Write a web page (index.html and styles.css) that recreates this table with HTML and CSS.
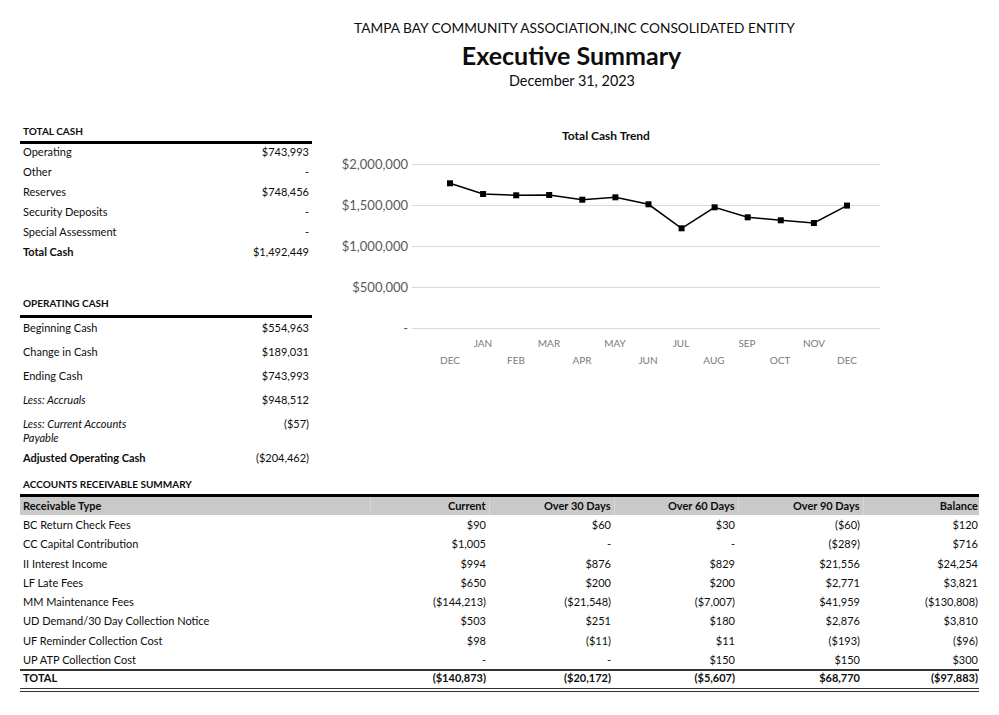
FILE: index.html
```html
<!DOCTYPE html>
<html>
<head>
<meta charset="utf-8">
<title>Executive Summary</title>
<link rel="stylesheet" href="styles.css">
</head>
<body>
<div class="page">
  <header class="header">
    <div class="org">TAMPA BAY COMMUNITY ASSOCIATION,INC CONSOLIDATED ENTITY</div>
    <h1 class="title">Executive Summary</h1>
    <div class="date">December 31, 2023</div>
  </header>

  <div class="top">
    <div class="left">
      <div class="sec-head sec-head-cash">TOTAL CASH</div>
      <table class="kv kv-cash">
        <tr><td>Operating</td><td class="num">$743,993</td></tr>
        <tr><td>Other</td><td class="num">-</td></tr>
        <tr><td>Reserves</td><td class="num">$748,456</td></tr>
        <tr><td>Security Deposits</td><td class="num">-</td></tr>
        <tr><td>Special Assessment</td><td class="num">-</td></tr>
        <tr class="bold"><td>Total Cash</td><td class="num">$1,492,449</td></tr>
      </table>

      <div class="sec-head sec-head-op">OPERATING CASH</div>
      <table class="kv kv-op">
        <tr><td class="lbl">Beginning Cash</td><td class="num">$554,963</td></tr>
        <tr><td class="lbl">Change in Cash</td><td class="num">$189,031</td></tr>
        <tr><td class="lbl">Ending Cash</td><td class="num">$743,993</td></tr>
        <tr class="it"><td class="lbl">Less: Accruals</td><td class="num">$948,512</td></tr>
        <tr class="it wrap"><td class="lbl">Less: Current Accounts Payable</td><td class="num">($57)</td></tr>
        <tr class="bold"><td class="lbl nowrap">Adjusted Operating Cash</td><td class="num">($204,462)</td></tr>
      </table>
    </div>

    <div class="chart">
      <svg width="560" height="250" viewBox="0 0 560 250" xmlns="http://www.w3.org/2000/svg">
        <text class="ctitle" x="276" y="16" text-anchor="middle">Total Cash Trend</text>
        <g class="grid">
          <line x1="82" y1="40.5" x2="550" y2="40.5"/>
          <line x1="82" y1="81.5" x2="550" y2="81.5"/>
          <line x1="82" y1="122.5" x2="550" y2="122.5"/>
          <line x1="82" y1="163.5" x2="550" y2="163.5"/>
          <line x1="82" y1="204.5" x2="550" y2="204.5"/>
        </g>
        <g class="ylab" text-anchor="end">
          <text x="78" y="45">$2,000,000</text>
          <text x="78" y="86">$1,500,000</text>
          <text x="78" y="127">$1,000,000</text>
          <text x="78" y="168">$500,000</text>
          <text x="78" y="209">-</text>
        </g>
        <g class="xlab" text-anchor="middle">
          <text x="153" y="223">JAN</text>
          <text x="219" y="223">MAR</text>
          <text x="285" y="223">MAY</text>
          <text x="351" y="223">JUL</text>
          <text x="417" y="223">SEP</text>
          <text x="484" y="223">NOV</text>
          <text x="120" y="240">DEC</text>
          <text x="186" y="240">FEB</text>
          <text x="252" y="240">APR</text>
          <text x="318" y="240">JUN</text>
          <text x="384" y="240">AUG</text>
          <text x="450" y="240">OCT</text>
          <text x="517" y="240">DEC</text>
        </g>
        <polyline class="series" points="120,59.3 153.1,70 186.2,71.3 219.2,71 252.3,75.7 285.4,73.3 318.5,80.3 351.6,104.3 384.6,83.3 417.7,93.3 450.8,96.3 483.9,99 517,81.6"/>
        <g class="marks">
          <rect x="117" y="56.3" width="6" height="6"/>
          <rect x="150.1" y="67" width="6" height="6"/>
          <rect x="183.2" y="68.3" width="6" height="6"/>
          <rect x="216.2" y="68" width="6" height="6"/>
          <rect x="249.3" y="72.7" width="6" height="6"/>
          <rect x="282.4" y="70.3" width="6" height="6"/>
          <rect x="315.5" y="77.3" width="6" height="6"/>
          <rect x="348.6" y="101.3" width="6" height="6"/>
          <rect x="381.6" y="80.3" width="6" height="6"/>
          <rect x="414.7" y="90.3" width="6" height="6"/>
          <rect x="447.8" y="93.3" width="6" height="6"/>
          <rect x="480.9" y="96" width="6" height="6"/>
          <rect x="514" y="78.6" width="6" height="6"/>
        </g>
      </svg>
    </div>
  </div>

  <section class="ar">
    <div class="sec-head sec-head-ar">ACCOUNTS RECEIVABLE SUMMARY</div>
    <table class="artable">
      <colgroup>
        <col class="c1"><col class="c2"><col class="c3"><col class="c4"><col class="c5"><col class="c6">
      </colgroup>
      <thead>
        <tr><th class="txt">Receivable Type</th><th>Current</th><th>Over 30 Days</th><th>Over 60 Days</th><th>Over 90 Days</th><th>Balance</th></tr>
      </thead>
      <tbody>
        <tr><td class="txt">BC Return Check Fees</td><td>$90</td><td>$60</td><td>$30</td><td>($60)</td><td>$120</td></tr>
        <tr><td class="txt">CC Capital Contribution</td><td>$1,005</td><td>-</td><td>-</td><td>($289)</td><td>$716</td></tr>
        <tr><td class="txt">II Interest Income</td><td>$994</td><td>$876</td><td>$829</td><td>$21,556</td><td>$24,254</td></tr>
        <tr><td class="txt">LF Late Fees</td><td>$650</td><td>$200</td><td>$200</td><td>$2,771</td><td>$3,821</td></tr>
        <tr><td class="txt">MM Maintenance Fees</td><td>($144,213)</td><td>($21,548)</td><td>($7,007)</td><td>$41,959</td><td>($130,808)</td></tr>
        <tr><td class="txt">UD Demand/30 Day Collection Notice</td><td>$503</td><td>$251</td><td>$180</td><td>$2,876</td><td>$3,810</td></tr>
        <tr><td class="txt">UF Reminder Collection Cost</td><td>$98</td><td>($11)</td><td>$11</td><td>($193)</td><td>($96)</td></tr>
        <tr><td class="txt">UP ATP Collection Cost</td><td>-</td><td>-</td><td>$150</td><td>$150</td><td>$300</td></tr>
      </tbody>
      <tfoot>
        <tr><td class="txt">TOTAL</td><td>($140,873)</td><td>($20,172)</td><td>($5,607)</td><td>$68,770</td><td>($97,883)</td></tr>
      </tfoot>
    </table>
  </section>
</div>
</body>
</html>
```

FILE: styles.css
```css
* { box-sizing: border-box; }
html, body { margin: 0; padding: 0; background: #fff; }
body {
  font-family: Lato, "Open Sans", "Liberation Sans", sans-serif;
  color: #0d0d0d;
  width: 999px;
  height: 715px;
  overflow: hidden;
}
.page { padding-top: 19px; }

.header { margin-left: 150px; text-align: center; }
.org { font-size: 13.7px; line-height: 18px; }
.title { margin: 4px 0 0; padding-right: 6px; font-size: 25px; line-height: 28px; font-weight: 700; }
.date { margin-top: 3px; padding-right: 5px; font-size: 14.4px; line-height: 18px; }

.top { display: flex; margin-top: 34px; align-items: flex-start; }
.left { width: 292px; margin-left: 20px; }
.chart { margin-left: 18px; }

.sec-head {
  font-size: 10px;
  font-weight: 700;
  line-height: 14px;
  border-bottom: 3px solid #000;
  padding-left: 3px;
}
.sec-head-cash { padding-bottom: 3px; }
.sec-head-op { margin-top: 32px; padding-bottom: 5px; }
.sec-head-ar { padding-bottom: 3px; }

.kv { width: 100%; border-collapse: collapse; font-size: 11px; }
.kv td { padding: 0 3px; line-height: 14px; vertical-align: top; }
.kv-cash td { padding-top: 1px; padding-bottom: 5px; }
.kv-op td { padding-top: 3px; padding-bottom: 7px; }
.kv-op .wrap td { padding-bottom: 3px; }
.kv .lbl { width: 140px; }
.kv .nowrap { white-space: nowrap; }
.kv .num { text-align: right; }
.kv .bold td { font-weight: 700; }
.kv .bold td.num { font-weight: 400; }
.kv .it td.lbl { font-style: italic; }

.ctitle { font-size: 12px; font-weight: 700; fill: #0d0d0d; font-family: Lato, "Open Sans", sans-serif; }
.grid line { stroke: #d9d9d9; stroke-width: 1; }
.ylab text { font-size: 13px; fill: #595959; font-family: Lato, "Open Sans", sans-serif; }
.xlab text { font-size: 10px; fill: #7a7a7a; font-family: Lato, "Open Sans", sans-serif; }
.series { fill: none; stroke: #000; stroke-width: 1.5; }
.marks rect { fill: #000; }

.ar { margin-left: 20px; width: 959px; margin-top: 5px; }
.artable { width: 959px; border-collapse: collapse; table-layout: fixed; font-size: 11px; }
.c1 { width: 350px; } .c2 { width: 119px; } .c3 { width: 125px; }
.c4 { width: 124px; } .c5 { width: 125px; } .c6 { width: 116px; }
.artable th, .artable td { text-align: right; padding: 0 3px; white-space: nowrap; }
.artable th.txt, .artable td.txt { text-align: left; }
.artable th:last-child, .artable td:last-child { padding-right: 1px; }
.artable thead th {
  background: #c9c9c9;
  font-weight: 700;
  line-height: 14px;
  padding-top: 2px;
  padding-bottom: 2px;
  border-left: 1px solid #d6d6d6;
}
.artable thead th:first-child { border-left: none; }
.artable tbody td { line-height: 19.25px; }
.artable tfoot td {
  font-weight: 700;
  line-height: 14px;
  padding-top: 0;
  padding-bottom: 3px;
  border-top: 2px solid #333;
  border-bottom: 4px double #333;
}
```
